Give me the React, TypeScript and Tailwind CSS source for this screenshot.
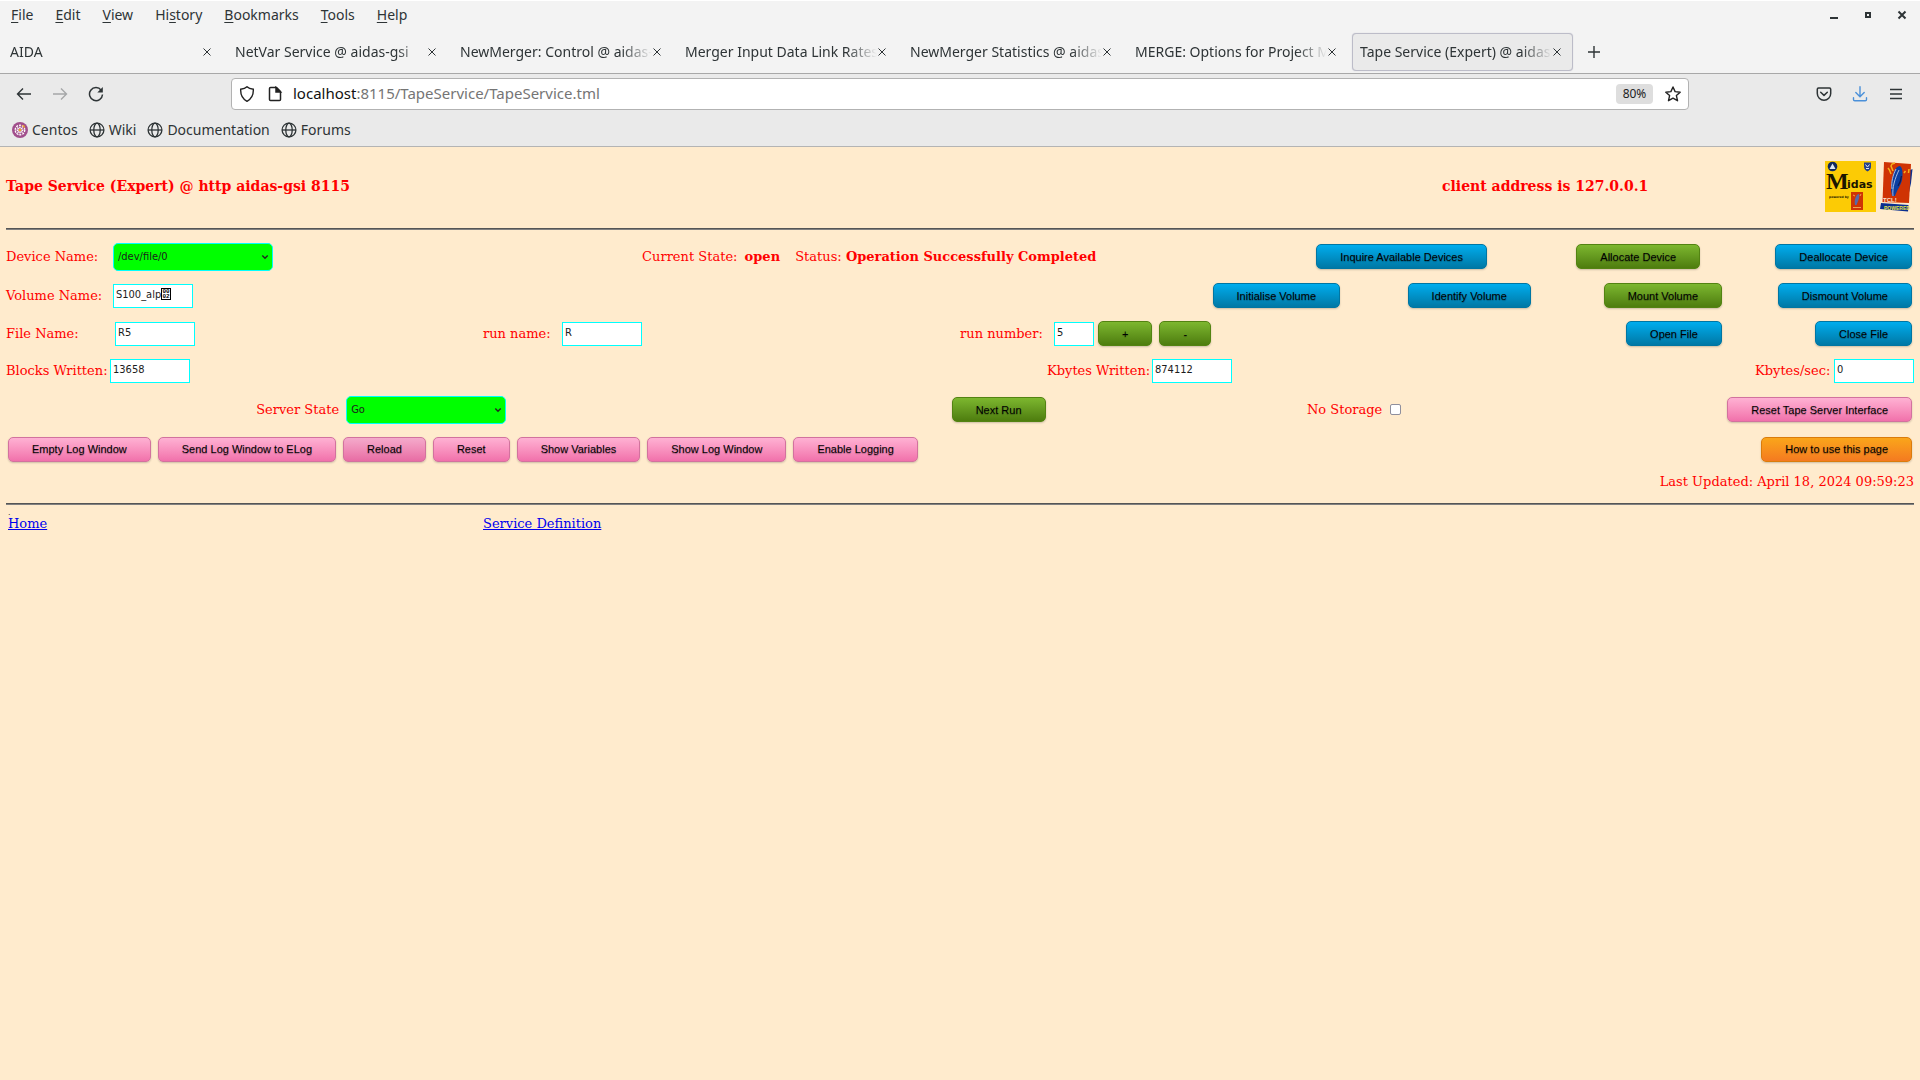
import type { ReactNode } from 'react';

const MENUS: [string, string, string][] = [
  ['', 'F', 'ile'],
  ['', 'E', 'dit'],
  ['', 'V', 'iew'],
  ['Hi', 's', 'tory'],
  ['', 'B', 'ookmarks'],
  ['', 'T', 'ools'],
  ['', 'H', 'elp'],
];

const TABS = [
  'AIDA',
  'NetVar Service @ aidas-gsi',
  'NewMerger: Control @ aidas-gsi',
  'Merger Input Data Link Rates',
  'NewMerger Statistics @ aidas-gsi',
  'MERGE: Options for Project M',
  'Tape Service (Expert) @ aidas-gsi',
];

const TONES = {
  blue: 'border-[#0076a3] from-[#00adee] to-[#0078a5]',
  green: 'border-[#538312] from-[#7db72f] to-[#4e7d0e]',
  pink: 'border-[#d2729e] from-[#feb1d3] to-[#f171ab]',
  pinkHover: 'border-[#d2729e] from-[#f4aacb] to-[#e86ca4]',
  orange: 'border-[#da7c0c] from-[#faa51a] to-[#f47a20]',
};

function Btn({ tone, children, label }: { tone: keyof typeof TONES; children: ReactNode; label?: string }) {
  return (
    <button
      type="button"
      aria-label={label}
      className={`h-[25px] shrink-0 justify-self-start rounded-[5px] border bg-linear-to-b px-[23px] font-['Liberation_Sans',sans-serif] text-[11px] whitespace-nowrap text-black shadow-[0_1px_2px_rgba(0,0,0,0.2)] [text-shadow:0_1px_1px_rgba(0,0,0,0.3)] ${TONES[tone]}`}
    >
      {children}
    </button>
  );
}

function Field({ id, label, value, labelClass = '', inputClass = 'w-20' }: { id: string; label: string; value: string; labelClass?: string; inputClass?: string }) {
  return (
    <>
      <label htmlFor={id} className={`whitespace-nowrap ${labelClass}`}>
        {label}
      </label>
      <input
        id={id}
        defaultValue={value}
        className={`h-6 shrink-0 border border-[#00ffff] bg-white px-0.5 pb-0.5 font-['DejaVu_Sans_Condensed',sans-serif] text-[11px] text-[#1c1c1c] outline-none ${inputClass}`}
      />
    </>
  );
}

function Drop({ id, value }: { id: string; value: string }) {
  return (
    <div className="relative h-7 w-40 shrink-0">
      <select
        id={id}
        className="h-7 w-40 appearance-none rounded-[5px] border border-[#00ffff] bg-[#00ff00] px-1 font-['DejaVu_Sans_Condensed',sans-serif] text-[11px] text-[#1c1c1c]"
      >
        <option>{value}</option>
      </select>
      <svg viewBox="0 0 8 8" className="pointer-events-none absolute top-2.5 right-1 size-2" fill="none" stroke="#222" strokeWidth="1.4">
        <path d="M1.3 2.5 4 5.2 6.7 2.5" />
      </svg>
    </div>
  );
}

function Cross() {
  return (
    <svg viewBox="0 0 10 10" className="size-2.5" stroke="#2e3436" strokeWidth="1" fill="none">
      <path d="M1.5 1.5 8.5 8.5M8.5 1.5 1.5 8.5" />
    </svg>
  );
}

function Globe() {
  return (
    <svg viewBox="0 0 16 16" className="size-4" fill="none" stroke="#2e3436" strokeWidth="1.3">
      <circle cx="8" cy="8" r="6.9" />
      <ellipse cx="8" cy="8" rx="3.2" ry="6.9" />
      <path d="M1 8H15" />
    </svg>
  );
}

function CentosIcon() {
  return (
    <svg viewBox="0 0 16 16" className="size-4">
      <circle cx="8" cy="8" r="8" fill="#a14f8c" />
      <g fill="none" stroke="#fff" strokeWidth="1.3">
        <circle cx="8" cy="8" r="4.8" strokeDasharray="2 1" />
        <circle cx="8" cy="8" r="2.4" strokeDasharray="1.2 .7" />
        <path d="M8 3V13M3 8H13M4.5 4.5 11.5 11.5M4.5 11.5 11.5 4.5" strokeWidth=".6" />
      </g>
      <circle cx="8" cy="8" r="1.3" fill="#efa724" />
      <path d="M9.5 3.2 12.6 3.4 12.8 6.5Z" fill="#efa724" />
    </svg>
  );
}

function TclArt() {
  return (
    <>
      <path d="M28 10 32.5 8 31 22 28 36Z" fill="#0a2f8f" />
      <path d="M4 1 31 3 29 42 2.500 41Z" fill="#cf3304" />
      <path d="M11 13 9.500 9 8 7M13 10 11 5 12 3 15 2M24 12 25.500 10M28.500 12 29 8" stroke="#f5b01c" strokeWidth="1.500" fill="none" />
      <path d="M12 35 C10 28 11 21 13 14 C14 9 17 5 20 5 C23 7 23 14 22 19 C21 24 17 29 15 35Z" fill="#0a3ea0" />
      <path d="M13 35 C12 27 15 17 19 9 M12 28 C11 21 13 14 16 8" stroke="#b9c6e4" strokeWidth=".9" fill="none" />
      <path d="M18 25 C20 22 21 19 21.500 15" stroke="#111b55" strokeWidth="1.300" fill="none" />
    </>
  );
}

function MidasLogo() {
  return (
    <svg viewBox="0 0 51 51" className="h-[51px] w-[51px]" role="img" aria-label="Midas">
      <rect width="51" height="51" fill="#fccb05" />
      <circle cx="7.5" cy="5.5" r="4.8" fill="#12295c" />
      <path d="M4.5 8 7.5 2.5 10.5 8Z" fill="#dfe8f2" />
      <path d="M39 1.5H46V6C46 8.5 44 9.5 42.5 10.5 41 9.5 39 8.5 39 6Z" fill="#24418b" />
      <path d="M40.5 3.5 42.5 6 44.5 3.5M41 7.5H44" stroke="#dfe8f2" strokeWidth="1" fill="none" />
      <text x="1" y="28" fontFamily="Liberation Serif, serif" fontWeight="bold" fontSize="24" fill="#1a1500">M</text>
      <text x="22" y="27" fontFamily="DejaVu Sans, sans-serif" fontWeight="bold" fontSize="11" fill="#1a1500">idas</text>
      <text x="4" y="37" fontFamily="DejaVu Sans, sans-serif" fontWeight="bold" fontSize="3" fill="#1a1500">powered by</text>
      <rect x="26" y="31" width="12" height="18" fill="#cf3304" />
      <path d="M30 44 C29 39 31 33 34 33 C35 37 33 40 31.500 44Z" fill="#5668a8" />
      <path d="M28 34 30 35M35 35 36 33M28 46.500H36" stroke="#f0a050" strokeWidth="1" />
    </svg>
  );
}

function TclLogo() {
  return (
    <svg viewBox="0 0 34 51" className="h-[51px] w-[34px]" role="img" aria-label="Tcl Powered">
      <TclArt />
      <text x="3" y="41" fontFamily="Liberation Sans, sans-serif" fontWeight="bold" fontSize="6" fill="#fbe3d0">TCL!</text>
      <path d="M1 42 28.5 44 28 50.5 0 48Z" fill="#0a2f8f" />
      <text x="4" y="49" fontFamily="Liberation Sans, sans-serif" fontWeight="bold" fontSize="5" fill="#e6e34a">POWERED</text>
    </svg>
  );
}

function Browser() {
  return (
    <header className="font-['Noto_Sans',sans-serif] text-sm text-[#2e3436]">
      <div className="flex h-[33px] items-center justify-between border-t border-white bg-[#f3f3f3] pr-[13px] pb-1 pl-[11px]">
        <nav className="flex gap-[22px]">
          {MENUS.map(([a, b, c]) => (
            <button key={a + b + c} type="button">
              {a}
              <span className="underline underline-offset-2">{b}</span>
              {c}
            </button>
          ))}
        </nav>
        <div className="flex items-center gap-6">
          <button type="button" aria-label="Minimize">
            <svg viewBox="0 0 10 10" className="size-2.5"><path d="M1 7H9V9H1Z" fill="#2e3436" /></svg>
          </button>
          <button type="button" aria-label="Restore">
            <svg viewBox="0 0 10 10" className="size-2.5" fill="none" stroke="#2e3436" strokeWidth="2"><path d="M3 3H7V7H3Z" /></svg>
          </button>
          <button type="button" aria-label="Close">
            <svg viewBox="0 0 10 10" className="size-2.5" stroke="#2e3436" strokeWidth="2"><path d="M1.5 1.5 8.5 8.5M8.5 1.5 1.5 8.5" /></svg>
          </button>
        </div>
      </div>

      <div className="flex h-[41px] items-start border-b border-[#a8a8a8] bg-[#f3f3f3]">
        {TABS.map((t, i) => (
          <div key={t} className="w-[225px] px-0.5">
            <div
              className={`flex h-[38px] items-center rounded border pr-2.5 pl-[7px] ${
                i === 6 ? 'border-[#bcbcc8] bg-[#eaeaea] shadow-[0_0_1px_#bcbcc8]' : 'border-transparent'
              }`}
            >
              <button
                type="button"
                className="min-w-0 flex-1 overflow-hidden text-left whitespace-nowrap [mask-image:linear-gradient(to_right,black_84%,transparent)]"
              >
                {t}
              </button>
              <button type="button" aria-label={`Close ${t}`}>
                <Cross />
              </button>
            </div>
          </div>
        ))}
        <button type="button" aria-label="New tab" className="ml-3 flex h-[38px] items-center">
          <svg viewBox="0 0 14 14" className="size-3.5" stroke="#2e3436" strokeWidth="1.4"><path d="M7 1V13M1 7H13" /></svg>
        </button>
      </div>

      <div className="flex h-[40px] items-center bg-[#eaeaea] px-4">
        <div className="flex w-[215px] gap-5">
          <button type="button" aria-label="Back">
            <svg viewBox="0 0 16 16" className="size-4" fill="none" stroke="#2e3436" strokeWidth="1.4"><path d="M15 8H1.5M7 2.5 1.5 8 7 13.5" /></svg>
          </button>
          <button type="button" aria-label="Forward">
            <svg viewBox="0 0 16 16" className="size-4" fill="none" stroke="#a5a7a8" strokeWidth="1.4"><path d="M1 8H14.5M9 2.5 14.5 8 9 13.5" /></svg>
          </button>
          <button type="button" aria-label="Reload">
            <svg viewBox="0 0 16 16" className="size-4" fill="none" stroke="#2e3436" strokeWidth="1.5">
              <path d="M13.2 4.2A6.5 6.5 0 1 0 14.5 8.5" />
              <path d="M14.8 1V6.5H9.3Z" fill="#2e3436" stroke="none" />
            </svg>
          </button>
        </div>
        <div className="flex h-8 flex-1 items-center rounded border border-[#b2b2b2] bg-white px-[7px]">
          <svg viewBox="0 0 16 16" className="size-4" fill="none" stroke="#222" strokeWidth="1.4">
            <path d="M8 .8C9.5 2.3 12 3 14.3 3.2 14.6 8.5 12.5 13 8 15.3 3.5 13 1.4 8.5 1.7 3.2 4 3 6.5 2.3 8 .8Z" />
          </svg>
          <svg viewBox="0 0 16 16" className="mr-2.5 ml-3 size-4" fill="none" stroke="#222" strokeWidth="1.5">
            <path d="M3.5 1.5H9.5L13.5 5.5V13.5Q13.5 14.5 12.5 14.5H3.5Q2.5 14.5 2.5 13.5V2.5Q2.5 1.5 3.5 1.5Z" />
            <path d="M9 1.5V6H13.5Z" fill="#222" />
          </svg>
          <div className="flex-1 text-[15px] text-[#757575]">
            <span className="text-[#111]">localhost</span>:8115/TapeService/TapeService.tml
          </div>
          <button type="button" className="mr-3 h-5 w-[37px] rounded-sm bg-[#dedede] text-xs text-[#222]">80%</button>
          <button type="button" aria-label="Bookmark this page">
            <svg viewBox="0 0 16 16" className="size-4" fill="none" stroke="#222" strokeWidth="1.4" strokeLinejoin="round">
              <path d="M8 1 10.1 5.6 15.2 6.2 11.4 9.6 12.5 14.7 8 12.1 3.5 14.7 4.6 9.6.8 6.2 5.9 5.6Z" />
            </svg>
          </button>
        </div>
        <div className="ml-[127px] flex items-center gap-5">
          <button type="button" aria-label="Pocket">
            <svg viewBox="0 0 16 16" className="size-4" fill="none" stroke="#2e3436" strokeWidth="1.5" strokeLinecap="round" strokeLinejoin="round">
              <path d="M2.5 2H13.5Q14.7 2 14.7 3.2V7.5A6.7 6.7 0 0 1 1.3 7.5V3.2Q1.3 2 2.5 2ZM4.7 6.2 8 9.4 11.3 6.2" />
            </svg>
          </button>
          <button type="button" aria-label="Downloads">
            <svg viewBox="0 0 16 16" className="size-4" fill="none" stroke="#4a90d9" strokeWidth="1.4" strokeLinecap="round">
              <path d="M8 .8V10.5M3.8 6.5 8 10.7 12.2 6.5M1.5 11.8V13.5Q1.5 14.8 2.8 14.8H13.2Q14.5 14.8 14.5 13.5V11.8" />
            </svg>
          </button>
          <button type="button" aria-label="Open application menu">
            <svg viewBox="0 0 16 16" className="size-4" stroke="#2e3436" strokeWidth="1.3"><path d="M2 3.5H14M2 8H14M2 12.5H14" /></svg>
          </button>
        </div>
      </div>

      <nav className="flex h-[33px] items-center gap-[11px] border-b border-[#b4b4b4] bg-[#eaeaea] pl-3">
        <a href="#centos" className="flex items-center gap-1"><CentosIcon />Centos</a>
        <a href="#wiki" className="flex items-center gap-1"><Globe />Wiki</a>
        <a href="#documentation" className="flex items-center gap-1"><Globe />Documentation</a>
        <a href="#forums" className="flex items-center gap-1"><Globe />Forums</a>
      </nav>
    </header>
  );
}

function Rule() {
  return <hr className="h-0.5 border-t border-b border-t-[#555555] border-b-[#808080]" />;
}

export default function App() {
  return (
    <div className="flex min-h-screen flex-col bg-[#ffebcd]">
      <Browser />
      <main className="px-1.5 font-['DejaVu_Serif',serif] text-[13px] leading-4 text-[#ff0000]">
        <div className="grid h-[81px] grid-cols-[1436fr_383fr_auto] items-center pb-[3px] text-sm font-bold">
          <h1>Tape Service (Expert) @ http aidas-gsi 8115</h1>
          <p>client address is 127.0.0.1</p>
          <div className="flex gap-1">
            <MidasLogo />
            <TclLogo />
          </div>
        </div>
        <Rule />

        <div className="mt-2 grid h-[38px] grid-cols-[636fr_674fr_260fr_199fr_auto] items-center pb-px">
          <div className="flex items-center">
            <label htmlFor="device" className="w-[107px]">Device Name:</label>
            <Drop id="device" value="/dev/file/0" />
          </div>
          <p className="whitespace-nowrap">
            Current State: <b className="mr-[11px] ml-[3px]">open</b> Status: <b>Operation Successfully Completed</b>
          </p>
          <Btn tone="blue">Inquire Available Devices</Btn>
          <Btn tone="green">Allocate Device</Btn>
          <div className="flex pr-0.5"><Btn tone="blue">Deallocate Device</Btn></div>
        </div>

        <div className="grid h-10 grid-cols-[1206fr_195fr_196fr_174fr_auto] items-center pb-px">
          <div className="relative flex items-center">
            <Field id="volume" label="Volume Name:" value="S100_alp" labelClass="w-[107px]" />
            <span className="pointer-events-none absolute top-1 left-[155px] flex h-3 w-2.5 flex-col items-center justify-center border border-black bg-white font-['Liberation_Mono',monospace] text-[6px] leading-[5px] font-bold text-black">
              <span>00</span>
              <span>02</span>
            </span>
          </div>
          <Btn tone="blue">Initialise Volume</Btn>
          <Btn tone="blue">Identify Volume</Btn>
          <Btn tone="green">Mount Volume</Btn>
          <div className="flex pr-0.5"><Btn tone="blue">Dismount Volume</Btn></div>
        </div>

        <div className="grid h-9 grid-cols-[477fr_477fr_666fr_189fr_auto] items-center pb-px">
          <div className="flex items-center"><Field id="file" label="File Name:" value="R5" labelClass="w-[109px]" /></div>
          <div className="flex items-center"><Field id="runname" label="run name:" value="R" labelClass="w-[79px]" /></div>
          <div className="flex items-center">
            <Field id="runnumber" label="run number:" value="5" labelClass="w-[94px]" inputClass="w-10" />
            <div className="ml-1 flex gap-[7px]">
              <Btn tone="green" label="Increase run number">+</Btn>
              <Btn tone="green" label="Decrease run number">-</Btn>
            </div>
          </div>
          <Btn tone="blue">Open File</Btn>
          <div className="flex pr-0.5"><Btn tone="blue">Close File</Btn></div>
        </div>

        <div className="grid h-[38px] grid-cols-[1041fr_708fr_auto] items-center pb-px">
          <div className="flex items-center"><Field id="blocks" label="Blocks Written:" value="13658" labelClass="w-[104px]" /></div>
          <div className="flex items-center"><Field id="kbytes" label="Kbytes Written:" value="874112" labelClass="w-[105px]" /></div>
          <div className="flex items-center"><Field id="rate" label="Kbytes/sec:" value="0" labelClass="w-[79px]" /></div>
        </div>

        <div className="grid h-[40px] grid-cols-[250fr_695fr_355fr_420fr_auto] items-center pb-px">
          <div className="col-start-2 flex items-center">
            <label htmlFor="server" className="w-[90px]">Server State</label>
            <Drop id="server" value="Go" />
          </div>
          <Btn tone="green">Next Run</Btn>
          <div className="flex items-center gap-2">
            <label htmlFor="nostorage">No Storage</label>
            <input id="nostorage" type="checkbox" className="size-[11px] appearance-none rounded-[2px] border border-[#8f8f9d] bg-white" />
          </div>
          <div className="flex pr-0.5"><Btn tone="pink">Reset Tape Server Interface</Btn></div>
        </div>

        <div className="flex h-[38px] items-center justify-between px-0.5">
          <div className="flex gap-[7px]">
            <Btn tone="pink">Empty Log Window</Btn>
            <Btn tone="pink">Send Log Window to ELog</Btn>
            <Btn tone="pinkHover">Reload</Btn>
            <Btn tone="pink">Reset</Btn>
            <Btn tone="pink">Show Variables</Btn>
            <Btn tone="pink">Show Log Window</Btn>
            <Btn tone="pink">Enable Logging</Btn>
          </div>
          <Btn tone="orange">How to use this page</Btn>
        </div>

        <p className="mt-1.5 mb-[13px] text-right">Last Updated: April 18, 2024 09:59:23</p>
        <Rule />
        <div className="h-[11px] pt-0.5 pl-0.5 text-[8px] leading-[11px] text-black">.</div>
        <nav className="grid grid-cols-[475fr_1429fr] px-0.5 text-[#0000ee] underline">
          <div><a href="#home">Home</a></div>
          <div><a href="#definition">Service Definition</a></div>
        </nav>
      </main>
    </div>
  );
}
